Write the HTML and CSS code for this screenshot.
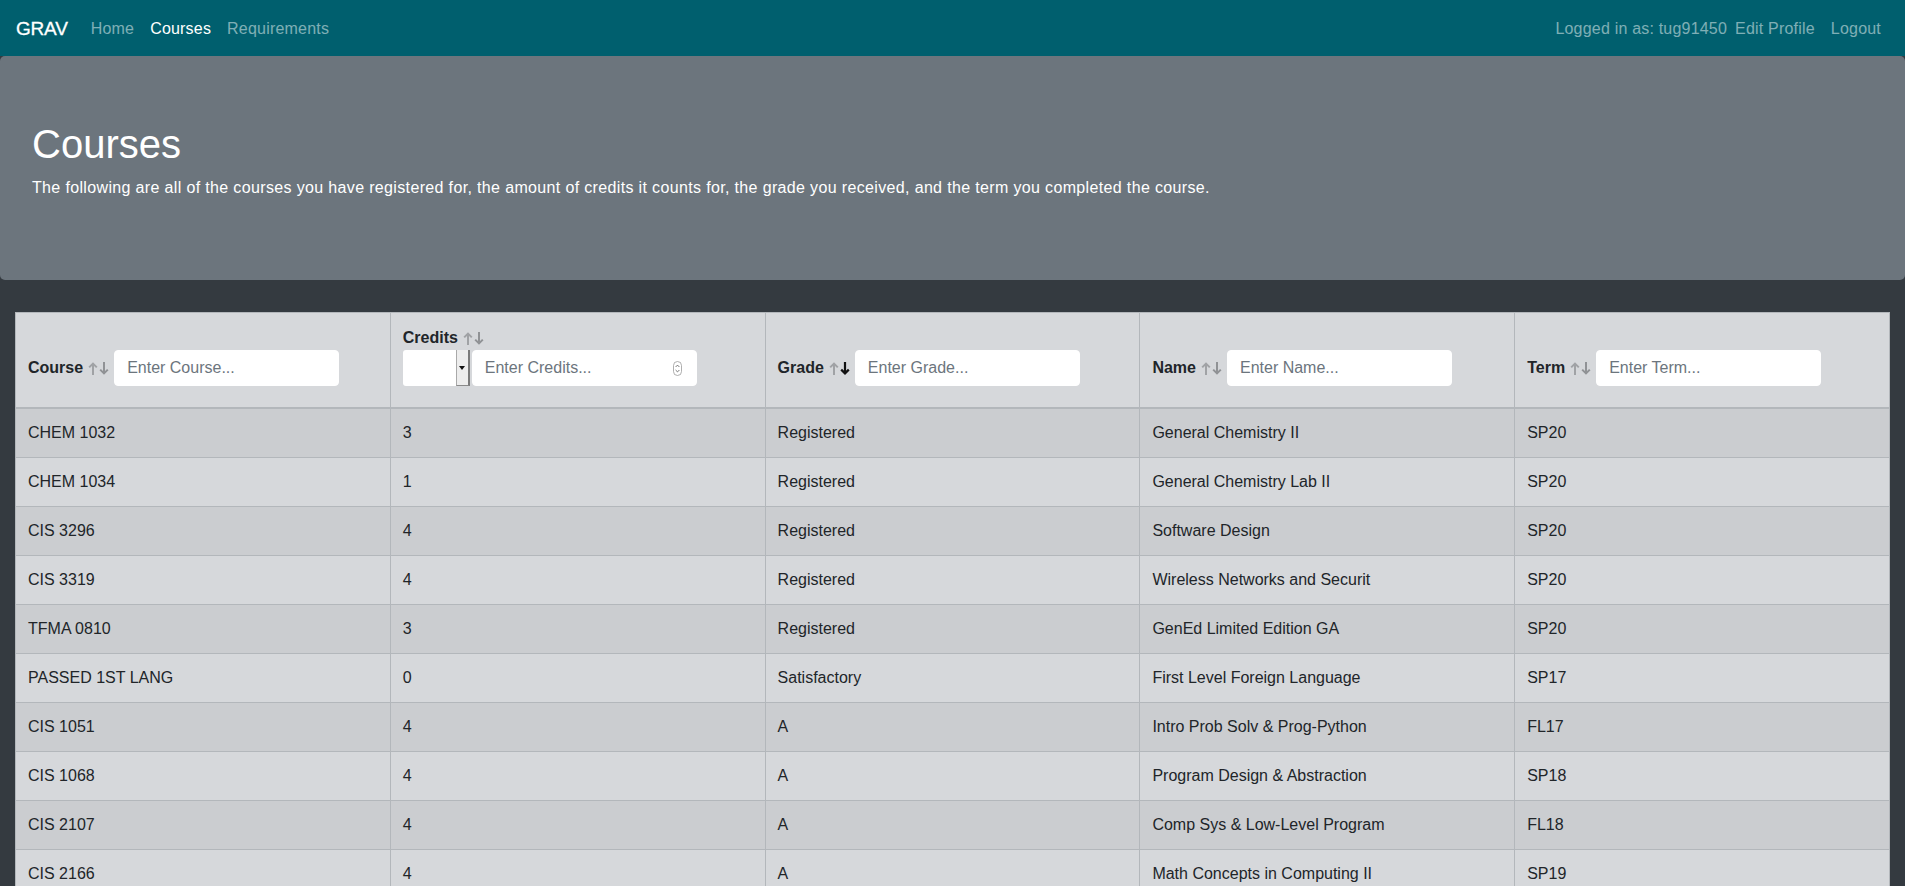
FILE: index.html
```html
<!DOCTYPE html>
<html lang="en">
<head>
<meta charset="utf-8">
<title>GRAV - Courses</title>
<link rel="stylesheet" href="styles.css">
</head>
<body>
<nav class="navbar">
  <div class="nav-group">
    <a class="brand" href="#">GRAV</a>
    <a class="nav-link" href="#">Home</a>
    <a class="nav-link active" href="#">Courses</a>
    <a class="nav-link" href="#">Requirements</a>
  </div>
  <div class="nav-group">
    <span class="nav-text">Logged in as: tug91450</span>
    <a class="nav-link" href="#">Edit Profile</a>
    <a class="nav-link" href="#">Logout</a>
  </div>
</nav>

<header class="jumbotron">
  <h1 class="title">Courses</h1>
  <p class="lead">The following are all of the courses you have registered for, the amount of credits it counts for, the grade you received, and the term you completed the course.</p>
</header>

<main class="content">
  <table class="courses">
    <thead>
      <tr>
        <th>
          <div class="filter">
            <span class="label">Course</span>
            <svg class="sort" width="22" height="13" viewBox="0 0 22 13"><path class="up" d="M5 13V1.6M1.2 5.4L5 1.6L8.8 5.4"/><path class="down" d="M16 0V11.4M12.2 7.6L16 11.4L19.8 7.6"/></svg>
            <input class="field" type="text" placeholder="Enter Course...">
          </div>
        </th>
        <th>
          <div class="label-line">
            <span class="label">Credits</span>
            <svg class="sort" width="22" height="13" viewBox="0 0 22 13"><path class="up" d="M5 13V1.6M1.2 5.4L5 1.6L8.8 5.4"/><path class="down" d="M16 0V11.4M12.2 7.6L16 11.4L19.8 7.6"/></svg>
          </div>
          <div class="filter credits-row">
            <div class="select"><span class="select-btn"><span class="caret"></span></span></div>
            <div class="field number">
              <span class="placeholder">Enter Credits...</span>
              <svg class="spin" width="9" height="15" viewBox="0 0 9 15"><rect x="0.5" y="0.5" width="8" height="14" rx="4"/><path d="M2.6 6L4.5 4.1L6.4 6M2.6 9L4.5 10.9L6.4 9"/></svg>
            </div>
          </div>
        </th>
        <th>
          <div class="filter">
            <span class="label">Grade</span>
            <svg class="sort" width="22" height="13" viewBox="0 0 22 13"><path class="up" d="M5 13V1.6M1.2 5.4L5 1.6L8.8 5.4"/><path class="down active" d="M16 0V11.4M12.2 7.6L16 11.4L19.8 7.6"/></svg>
            <input class="field" type="text" placeholder="Enter Grade...">
          </div>
        </th>
        <th>
          <div class="filter">
            <span class="label">Name</span>
            <svg class="sort" width="22" height="13" viewBox="0 0 22 13"><path class="up" d="M5 13V1.6M1.2 5.4L5 1.6L8.8 5.4"/><path class="down" d="M16 0V11.4M12.2 7.6L16 11.4L19.8 7.6"/></svg>
            <input class="field" type="text" placeholder="Enter Name...">
          </div>
        </th>
        <th>
          <div class="filter">
            <span class="label">Term</span>
            <svg class="sort" width="22" height="13" viewBox="0 0 22 13"><path class="up" d="M5 13V1.6M1.2 5.4L5 1.6L8.8 5.4"/><path class="down" d="M16 0V11.4M12.2 7.6L16 11.4L19.8 7.6"/></svg>
            <input class="field" type="text" placeholder="Enter Term...">
          </div>
        </th>
      </tr>
    </thead>
    <tbody>
      <tr><td>CHEM 1032</td><td>3</td><td>Registered</td><td>General Chemistry II</td><td>SP20</td></tr>
      <tr><td>CHEM 1034</td><td>1</td><td>Registered</td><td>General Chemistry Lab II</td><td>SP20</td></tr>
      <tr><td>CIS 3296</td><td>4</td><td>Registered</td><td>Software Design</td><td>SP20</td></tr>
      <tr><td>CIS 3319</td><td>4</td><td>Registered</td><td>Wireless Networks and Securit</td><td>SP20</td></tr>
      <tr><td>TFMA 0810</td><td>3</td><td>Registered</td><td>GenEd Limited Edition GA</td><td>SP20</td></tr>
      <tr><td>PASSED 1ST LANG</td><td>0</td><td>Satisfactory</td><td>First Level Foreign Language</td><td>SP17</td></tr>
      <tr><td>CIS 1051</td><td>4</td><td>A</td><td>Intro Prob Solv &amp; Prog-Python</td><td>FL17</td></tr>
      <tr><td>CIS 1068</td><td>4</td><td>A</td><td>Program Design &amp; Abstraction</td><td>SP18</td></tr>
      <tr><td>CIS 2107</td><td>4</td><td>A</td><td>Comp Sys &amp; Low-Level Program</td><td>FL18</td></tr>
      <tr><td>CIS 2166</td><td>4</td><td>A</td><td>Math Concepts in Computing II</td><td>SP19</td></tr>
    </tbody>
  </table>
</main>
</body>
</html>
```

FILE: styles.css
```css
* { box-sizing: border-box; }

body {
  margin: 0;
  background: #343a40;
  font-family: "Liberation Sans", Arial, sans-serif;
  font-size: 16px;
  line-height: 1.5;
  color: #212529;
}

/* navbar */
.navbar {
  display: flex;
  justify-content: space-between;
  align-items: center;
  height: 56px;
  padding: 2px 16px 0;
  background: #005f6e;
}
.nav-group {
  display: flex;
  align-items: center;
}
.brand {
  color: #fff;
  font-size: 19px;
  font-weight: 500;
  letter-spacing: -0.2px;
  line-height: 30px;
  margin-right: 15px;
  text-decoration: none;
  -webkit-text-stroke: 0.3px #fff;
}
.nav-link {
  color: rgba(255, 255, 255, 0.5);
  text-decoration: none;
  padding: 8px;
  line-height: 24px;
  letter-spacing: 0.2px;
}
.nav-link.active { color: #fff; }
.nav-text {
  color: rgba(255, 255, 255, 0.5);
  line-height: 24px;
  letter-spacing: 0.2px;
}

/* jumbotron */
.jumbotron {
  background: #6c757d;
  color: #fff;
  padding: 64px 32px;
  margin-bottom: 32px;
  border-radius: 5px;
}
.title {
  font-size: 40px;
  line-height: 48px;
  font-weight: 500;
  margin: 0 0 8px;
}
.lead {
  margin: 0 0 16px;
  letter-spacing: 0.35px;
}

/* table */
.content {
  padding: 0 15px;
}
.courses {
  width: 100%;
  border-collapse: collapse;
  table-layout: fixed;
  background: #d6d8db;
}
.courses th,
.courses td {
  border: 1px solid #b3b7bb;
  padding: 12px;
  text-align: left;
  line-height: 24px;
}
.courses th {
  vertical-align: bottom;
  border-bottom: 2px solid #b3b7bb;
  padding-top: 13px;
  padding-bottom: 21px;
  font-weight: bold;
}
.courses tbody tr:nth-child(odd) {
  background: #cbcdd0;
}

.filter {
  display: flex;
  align-items: center;
}
.label-line {
  display: flex;
  align-items: center;
  height: 24px;
}
.label {
  margin-right: 5px;
}
.sort {
  flex: none;
  margin-right: 4px;
  fill: none;
  stroke-width: 2;
}
.sort .up { stroke: #a0a2a5; }
.sort .down { stroke: #909295; }
.sort .down.active { stroke: #111; stroke-width: 2.2; }

.field {
  width: 225px;
  height: 36px;
  background: #fff;
  border: 1px solid #fff;
  border-radius: 4px;
  padding: 0 12px;
  font-family: inherit;
  font-size: 16px;
  color: #495057;
  outline: none;
}
.field::placeholder { color: #6c757d; opacity: 1; }

.select {
  width: 67px;
  height: 36px;
  background: #fff;
  border-radius: 3px 0 0 3px;
  display: flex;
  justify-content: flex-end;
  margin-right: 2px;
}
.select-btn {
  width: 14px;
  height: 36px;
  background: #ededed;
  border-left: 1px solid #a9a9a9;
  border-right: 2px solid #7b7b7b;
  border-bottom: 1px solid #8a8a8a;
  display: flex;
  align-items: center;
  justify-content: center;
}
.caret {
  width: 0;
  height: 0;
  border-left: 3px solid transparent;
  border-right: 3px solid transparent;
  border-top: 4px solid #111;
}

.number {
  display: flex;
  align-items: center;
  justify-content: space-between;
  padding-right: 14px;
  font-weight: normal;
}
.placeholder { color: #6c757d; }
.spin {
  flex: none;
  fill: none;
  stroke: #9a9a9a;
  stroke-width: 0.8;
}
.spin path { stroke: #555; }
```
